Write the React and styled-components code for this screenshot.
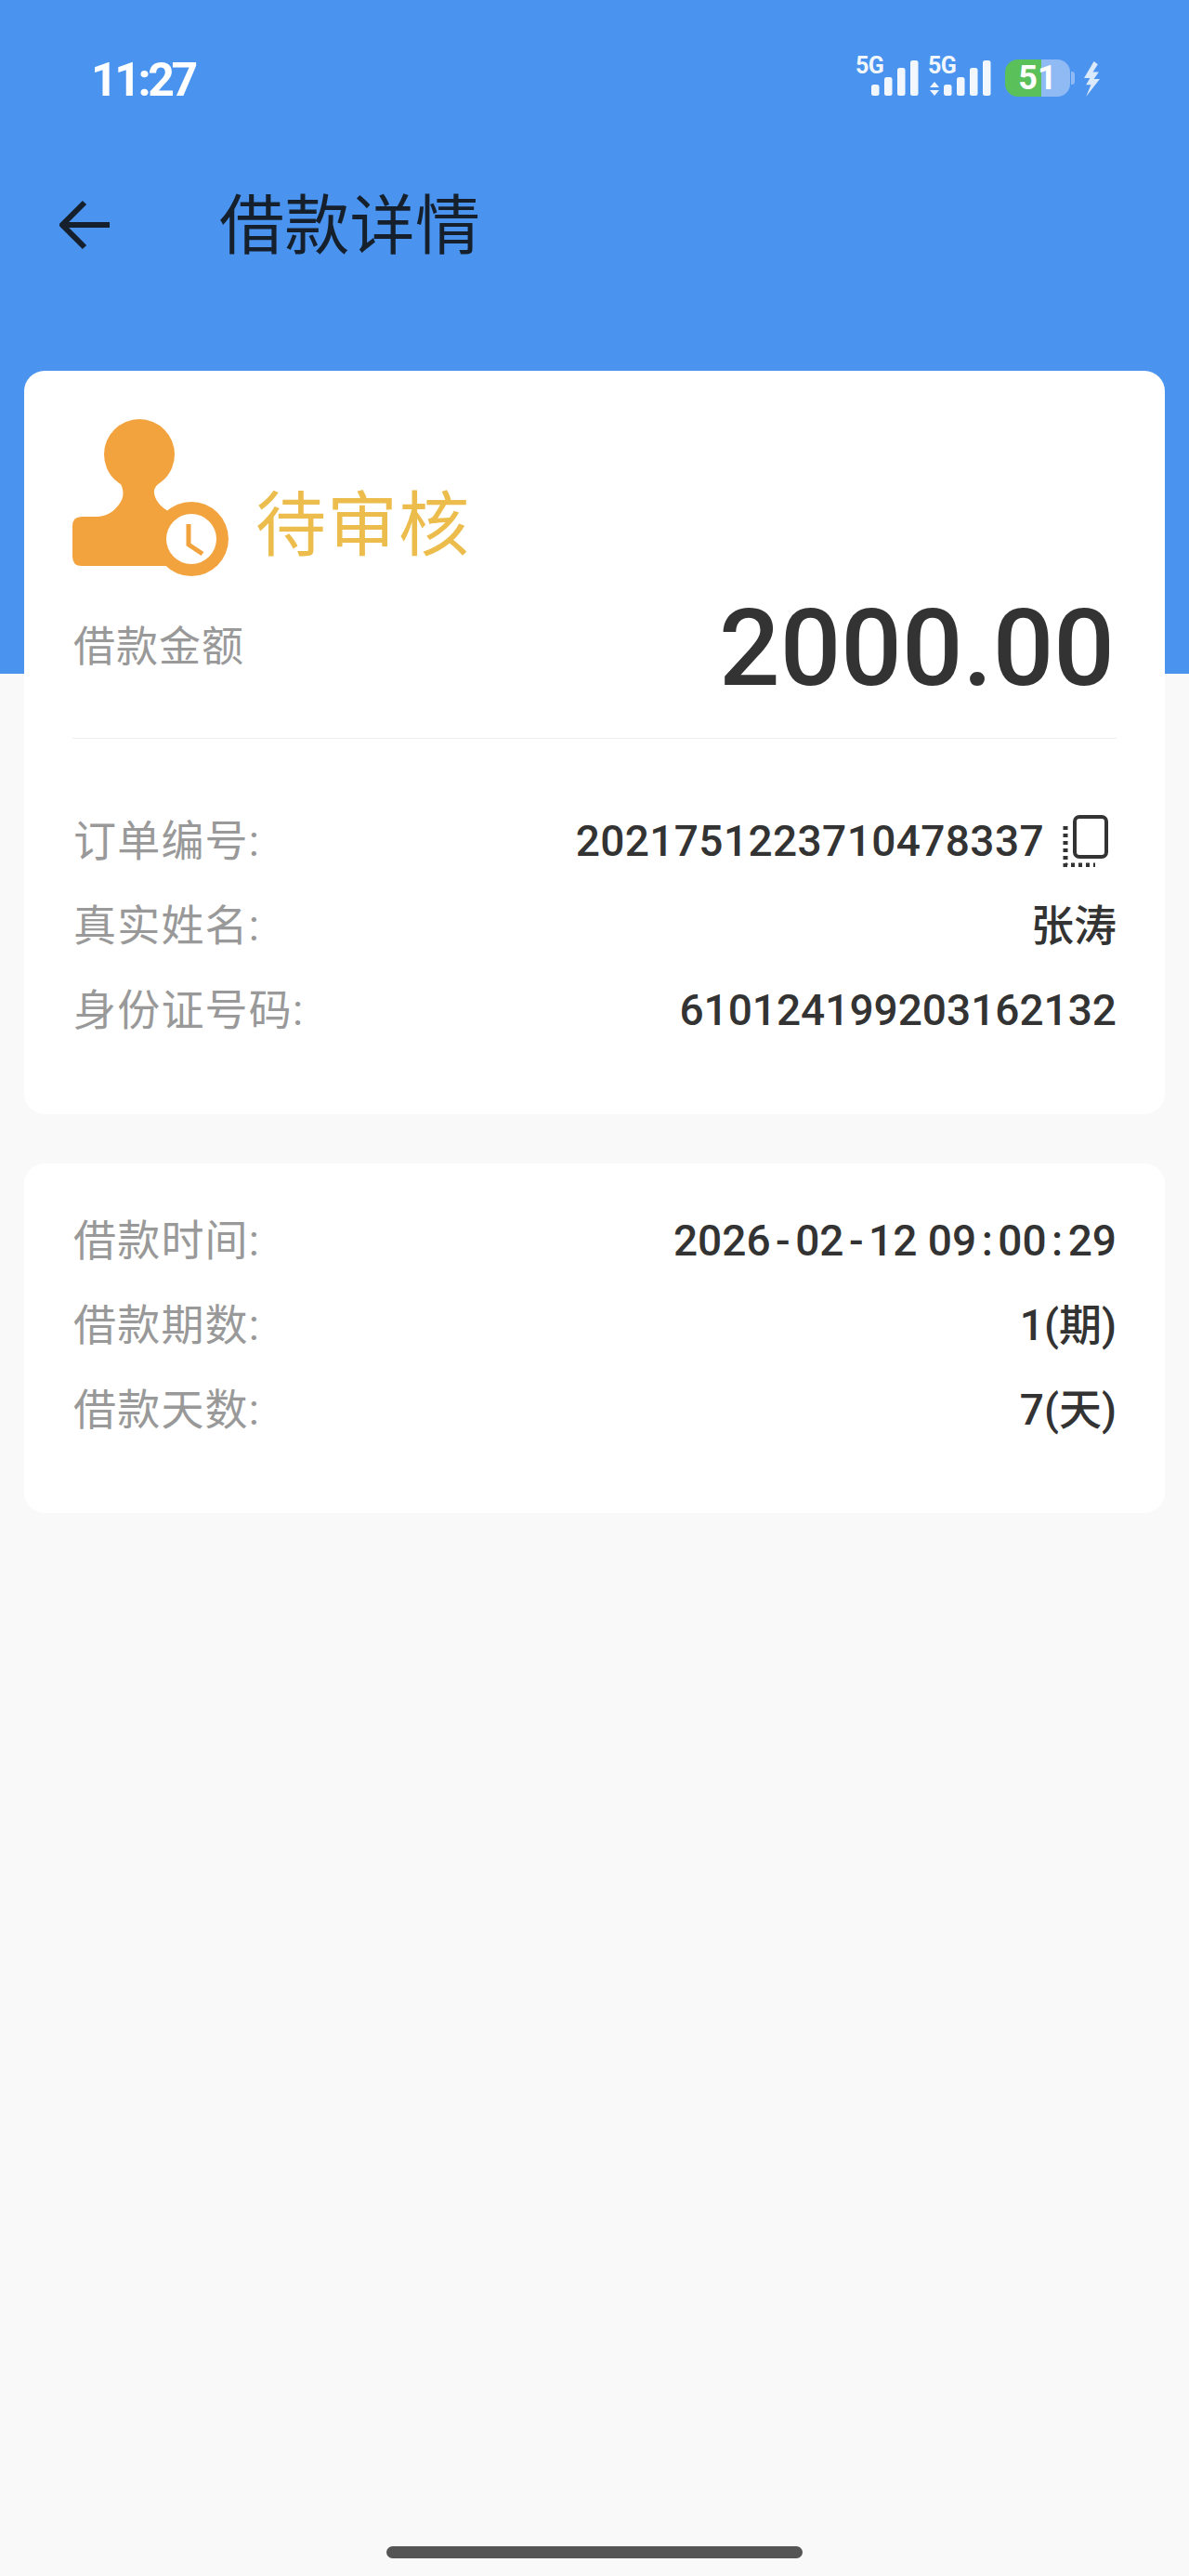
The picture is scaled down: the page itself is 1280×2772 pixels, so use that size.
import styled, { createGlobalStyle } from 'styled-components'

const GlobalStyle = createGlobalStyle`
html,body{margin:0;padding:0;background:#f9f9f9;}
body{font-family:"Roboto","Noto Sans CJK SC",sans-serif;}
`

//#region styled
const Page = styled.div`
width:1280px;
height:2772px;
display:flex;
flex-direction:column;
background:#f9f9f9;
overflow:hidden;
`
const Header = styled.header`
height:725px;
flex:none;
background:#4a94f0;
display:flex;
flex-direction:column;
`
const StatusBar = styled.div`
height:172px;
box-sizing:border-box;
padding:56px 95px 0 98px;
display:flex;
justify-content:space-between;
align-items:flex-start;
`
const Time = styled.div`
font-size:50px;
line-height:60px;
font-weight:700;
letter-spacing:-3.4px;
color:#fff;
`
const StatusIcons = styled.div`
display:flex;
align-items:flex-start;
margin-top:-1px;
`
const NavBar = styled.div`
height:140px;
display:flex;
align-items:center;
padding-left:64px;
`
const BackButton = styled.button`
width:54px;
height:54px;
padding:0;
border:0;
background:none;
display:flex;
margin-right:118px;
`
const Title = styled.h1`
margin:4px 0 0;
font-size:70px;
line-height:100px;
font-weight:400;
letter-spacing:0.3px;
color:#16202c;
`
const Content = styled.main`
margin-top:-326px;
padding:0 26px;
display:flex;
flex-direction:column;
gap:53px;
`
const Card = styled.section`
background:#fff;
border-radius:22px;
padding:${(props)=>(props.Top?props.Top:'0')} 52px 0;
height:${(props)=>props.Height};
box-sizing:border-box;
`
const StatusRow = styled.div`
display:flex;
align-items:flex-end;
height:172px;
`
const StatusText = styled.div`
margin:0 0 7px 27px;
font-size:76px;
line-height:100px;
letter-spacing:1px;
color:#ecbd4c;
`
const AmountRow = styled.div`
display:flex;
justify-content:space-between;
align-items:center;
height:96px;
margin-top:27px;
border-bottom:1px solid #eeeeee;
padding-bottom:48px;
`
const AmountLabel = styled.div`
font-size:45px;
line-height:60px;
letter-spacing:1px;
padding-left:1px;
margin-bottom:3px;
color:#999;
`
const AmountValue = styled.div`
font-size:115.5px;
line-height:96px;
font-weight:500;
color:#333;
margin-right:2px;
`
const Rows = styled.div`
display:flex;
flex-direction:column;
padding-top:${(props)=>(props.Top?props.Top:'0')};
`
const Row = styled.div`
height:91px;
display:flex;
justify-content:space-between;
align-items:center;
font-size:46px;
line-height:60px;
`
const Label = styled.div`
color:#999;
letter-spacing:1.2px;
padding-left:1px;
`
const Value = styled.div`
color:#333;
display:flex;
align-items:center;
font-weight:500;
letter-spacing:${(props)=>(props.Spacing?props.Spacing:'0')};
white-space:pre;
`
const Sep = styled.span`
padding:0 5.5px;
`
const CopyIcon = styled.svg`
width:50px;
height:56px;
margin-left:19px;
margin-right:9px;
`
const Battery = styled.div`
position:relative;
width:70px;
height:40px;
margin-left:13px;
margin-top:9px;
border-radius:14px;
background:linear-gradient(90deg,#5ac05a 0 39px,#8fbaf4 39px);
display:flex;
align-items:center;
justify-content:center;
font-size:36px;
font-weight:700;
color:#fff;
&::after{
  content:'';
  position:absolute;
  right:-5px;
  top:13px;
  width:4px;
  height:14px;
  border-radius:0 3px 3px 0;
  background:#8fbaf4;
}
`
const Bolt = styled.svg`
width:19px;
height:38px;
margin-left:14px;
margin-top:11px;
`
const HomeBar = styled.div`
width:448px;
height:13px;
border-radius:7px;
background:#555;
margin:auto auto 19px;
`
//#endregion

const SignalIcon=(props)=>(
    <svg width="70" height="52" viewBox="0 0 70 52" style={{marginLeft:props.Gap}}>
        <text x="0" y="24" fontFamily="Roboto" fontWeight="700" fontSize="25" letterSpacing="-0.5" fill="#f2f7fe">5G</text>
        {props.Arrows && <path d="M2 39 L7 33 L12 39Z M2 42 L12 42 L7 48Z" fill="#f2f7fe"/>}
        {[[17,36],[31,28],[45,18],[59,10]].map(([x,y])=>(
            <rect key={x} x={x} y={y} width="8.5" height={48-y} rx="2.5" fill="#f2f7fe"/>
        ))}
    </svg>
)

const StampIcon=()=>(
    <svg width="170" height="172" viewBox="0 0 170 172" style={{flex:'none'}}>
        <circle cx="72" cy="38" r="38" fill="#f3a33e"/>
        <path d="M50 66 C56 76 56 84 50 92 C44 100 36 105 26 105 H10 Q0 105 0 115 V148 Q0 158 10 158 H125 V105 C104 104 90 92 88 80 C87 74 92 70 96 66 Z" fill="#f3a33e"/>
        <circle cx="128" cy="129" r="40" fill="#f3a33e"/>
        <circle cx="128" cy="129" r="27" fill="#fff"/>
        <path d="M125 113 V135 L140 145" fill="none" stroke="#f3a33e" strokeWidth="5"/>
    </svg>
)

const App=()=>{
    const Order=[['订单编号:','2021751223710478337',true],['真实姓名:','张涛'],['身份证号码:','610124199203162132']]
    const Loan=[
        ['借款时间:',<>2026<Sep>-</Sep>02<Sep>-</Sep>12 09<Sep>:</Sep>00<Sep>:</Sep>29</>],
        ['借款期数:','1(期)'],
        ['借款天数:','7(天)'],
    ]

    return(
        <Page>
            <GlobalStyle/>
            <Header>
                <StatusBar>
                    <Time>11:27</Time>
                    <StatusIcons>
                        <SignalIcon/>
                        <SignalIcon Arrows Gap="8px"/>
                        <Battery>51</Battery>
                        <Bolt viewBox="0 0 18 36">
                            <path d="M11 0 L1 17 L7 17 L3 24 L8 24 L3 36 L17 18 L11 18 L16 11 L10 11 L15 3Z" fill="#dbe9fc"/>
                        </Bolt>
                    </StatusIcons>
                </StatusBar>
                <NavBar>
                    <BackButton>
                        <svg width="54" height="54" viewBox="0 0 54 54">
                            <path d="M27 3 L3 27 L27 51 M3 27 H54" fill="none" stroke="#16202c" strokeWidth="6"/>
                        </svg>
                    </BackButton>
                    <Title>借款详情</Title>
                </NavBar>
            </Header>
            <Content>
                <Card Height="800px" Top="52px">
                    <StatusRow>
                        <StampIcon/>
                        <StatusText>待审核</StatusText>
                    </StatusRow>
                    <AmountRow>
                        <AmountLabel>借款金额</AmountLabel>
                        <AmountValue>2000.00</AmountValue>
                    </AmountRow>
                    <Rows Top="64px">
                        {Order.map(([label,value,copy])=>(
                            <Row key={label}>
                                <Label>{label}</Label>
                                <Value Spacing={copy?'0.4px':'0'}>
                                    {value}
                                    {copy && (
                                        <CopyIcon viewBox="0 0 50 56">
                                            <rect x="14" y="2" width="34" height="43" rx="5" fill="none" stroke="#333" strokeWidth="4"/>
                                            <path d="M4 12 V54 H36" fill="none" stroke="#333" strokeWidth="5" strokeDasharray="4 4"/>
                                        </CopyIcon>
                                    )}
                                </Value>
                            </Row>
                        ))}
                    </Rows>
                </Card>
                <Card Height="376px">
                    <Rows Top="37px">
                        {Loan.map(([label,value])=>(
                            <Row key={label}>
                                <Label>{label}</Label>
                                <Value>{value}</Value>
                            </Row>
                        ))}
                    </Rows>
                </Card>
            </Content>
            <HomeBar/>
        </Page>
    )
}

export default App
